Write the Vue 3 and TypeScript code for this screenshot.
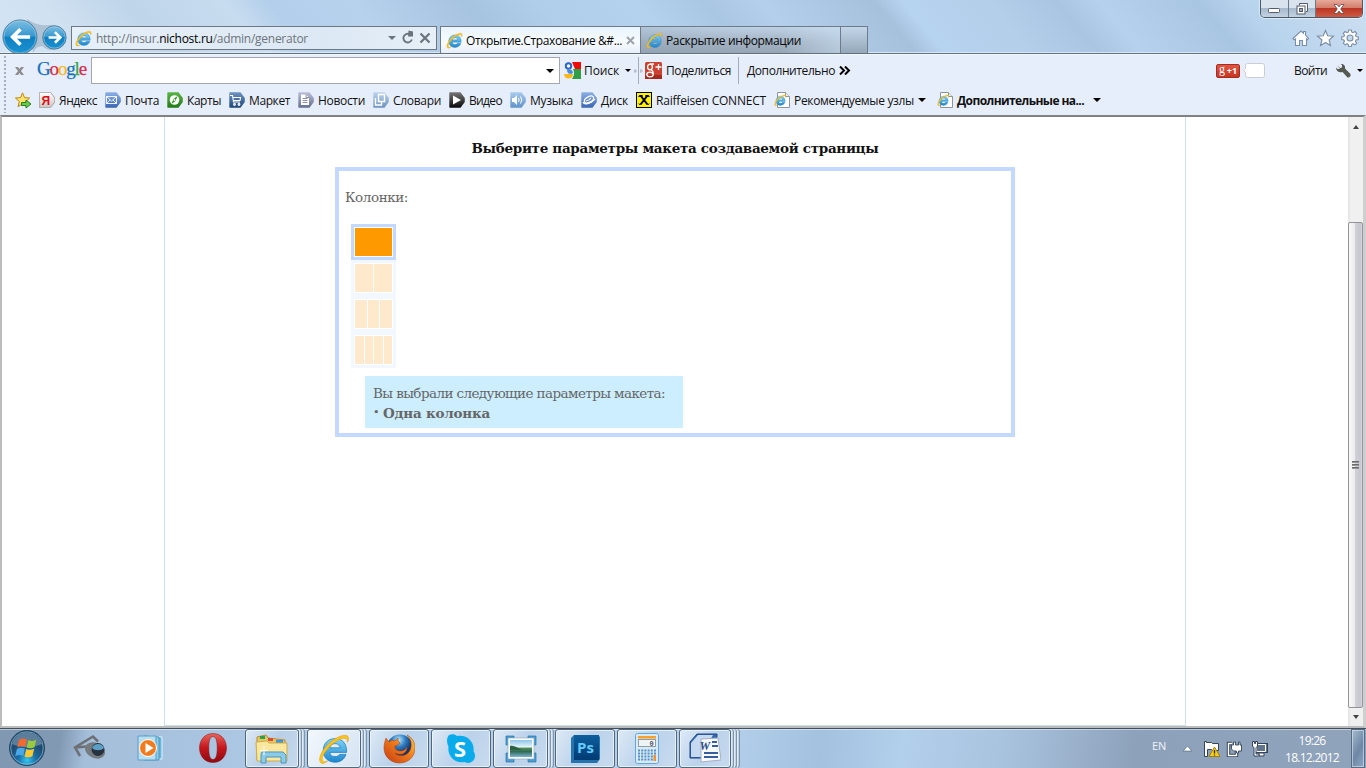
<script setup lang="ts">
import type { Directive } from 'vue'

interface Bookmark { id: string; label: string; width: number; arrow?: boolean; bold?: boolean }
interface Task { id: string; width: number; stacked?: number; gap: number }

// Adjusts tracking so a label fills its intended width in pixels.
const vFit: Directive<HTMLElement, number> = {
  mounted(el, { value }) {
    const count = Math.max(1, (el.textContent ?? '').trim().length)
    const natural = el.getBoundingClientRect().width
    el.style.letterSpacing = `${(value - natural) / count}px`
  },
}

const bookmarks: Bookmark[] = [
  { id: 'yandex', label: 'Яндекс', width: 38 },
  { id: 'mail', label: 'Почта', width: 34 },
  { id: 'maps', label: 'Карты', width: 34 },
  { id: 'market', label: 'Маркет', width: 41 },
  { id: 'news', label: 'Новости', width: 47 },
  { id: 'dict', label: 'Словари', width: 48 },
  { id: 'video', label: 'Видео', width: 33 },
  { id: 'music', label: 'Музыка', width: 43 },
  { id: 'disk', label: 'Диск', width: 27 },
  { id: 'raif', label: 'Raiffeisen CONNECT', width: 110 },
  { id: 'page', label: 'Рекомендуемые узлы', width: 120, arrow: true },
  { id: 'page', label: 'Дополнительные на...', width: 127, arrow: true, bold: true },
]

const tagFill: Record<string, string> = {
  yandex: 'url(#gWhite)', mail: 'url(#gMail)', maps: 'url(#gGreen)', market: 'url(#gNavy)',
  news: 'url(#gSlate)', dict: 'url(#gPale)', video: 'url(#gBlack)', music: 'url(#gSky)', disk: 'url(#gMail)',
}

const layouts = [1, 2, 3, 4]
const selected = 1

const tasks: Task[] = [
  { id: 'explorer', width: 54, stacked: 2, gap: 2 },
  { id: 'ie', width: 54, stacked: 2, gap: 2 },
  { id: 'firefox', width: 60, gap: 2 },
  { id: 'skype', width: 60, gap: 2 },
  { id: 'viewer', width: 55, stacked: 2, gap: 1 },
  { id: 'ps', width: 60, gap: 2 },
  { id: 'calc', width: 60, gap: 2 },
  { id: 'word', width: 52, stacked: 3, gap: 0 },
]
</script>

<template>
  <div class="screen">
    <svg class="defs" width="0" height="0">
      <defs>
        <linearGradient id="gWhite" x2="0" y2="1"><stop stop-color="#fff" /><stop offset="1" stop-color="#c9c5c1" /></linearGradient>
        <linearGradient id="gMail" x2="0" y2="1"><stop stop-color="#8db0e4" /><stop offset="1" stop-color="#3a65b4" /></linearGradient>
        <linearGradient id="gGreen" x2="0" y2="1"><stop stop-color="#5cb547" /><stop offset="1" stop-color="#237a16" /></linearGradient>
        <linearGradient id="gNavy" x2="0" y2="1"><stop stop-color="#6d94c4" /><stop offset="1" stop-color="#1e4676" /></linearGradient>
        <linearGradient id="gSlate" x2="0" y2="1"><stop stop-color="#b9bfd6" /><stop offset="1" stop-color="#666e92" /></linearGradient>
        <linearGradient id="gPale" x2="0" y2="1"><stop stop-color="#bdd4ec" /><stop offset="1" stop-color="#6d93c0" /></linearGradient>
        <linearGradient id="gBlack" x2="0" y2="1"><stop stop-color="#777" /><stop offset="1" stop-color="#080808" /></linearGradient>
        <linearGradient id="gSky" x2="0" y2="1"><stop stop-color="#a9cbee" /><stop offset="1" stop-color="#5f93cb" /></linearGradient>
        <linearGradient id="gNav" x2="0" y2="1"><stop stop-color="#7fbfe2" /><stop offset=".48" stop-color="#3697cf" /><stop offset=".5" stop-color="#0d7fc2" /><stop offset="1" stop-color="#1b93d2" /></linearGradient>
        <linearGradient id="gE" x2="0" y2="1"><stop stop-color="#7fd4f5" /><stop offset="1" stop-color="#1c86cf" /></linearGradient>
        <linearGradient id="gOpera" x2="0" y2="1"><stop stop-color="#e8645c" /><stop offset=".5" stop-color="#c4161c" /><stop offset="1" stop-color="#8d0a10" /></linearGradient>
        <radialGradient id="gOrb" cy=".85"><stop stop-color="#35c8f2" /><stop offset=".5" stop-color="#1b6ea6" /><stop offset="1" stop-color="#1f4d74" /></radialGradient>
        <radialGradient id="gGlobe" cx=".45" cy=".2"><stop stop-color="#bfe6fb" /><stop offset=".5" stop-color="#2f7fc4" /><stop offset="1" stop-color="#12356f" /></radialGradient>
        <linearGradient id="gFox" x1="1" x2="0" y2="1"><stop stop-color="#ffd23c" /><stop offset=".45" stop-color="#ef7d1b" /><stop offset="1" stop-color="#c33a12" /></linearGradient>
        <linearGradient id="gPs" x2="0" y2="1"><stop stop-color="#0d5f9e" /><stop offset="1" stop-color="#003a73" /></linearGradient>
        <linearGradient id="gLake" x2="0" y2="1"><stop stop-color="#8cc4ea" /><stop offset=".4" stop-color="#e4f3fa" /><stop offset=".5" stop-color="#4f8a56" /><stop offset=".68" stop-color="#2f6b58" /><stop offset="1" stop-color="#7fb3cf" /></linearGradient>
        <symbol id="e" viewBox="0 0 16 16">
          <path d="M14.300 9.700H5.900c.2 1.400 1.200 2.100 2.600 2.100 1 0 1.800-.4 2.300-1.100h3.200c-.8 2.500-2.800 3.900-5.500 3.900-3.500 0-5.900-2.300-5.900-5.800 0-3.600 2.500-6 5.900-6 3.700 0 6 2.500 5.800 6.900zM11.100 7.400C10.900 6.100 9.900 5.300 8.500 5.300S6.200 6.100 5.900 7.400z" fill="url(#gE)" stroke="#1978b8" stroke-width=".35" />
          <path d="M1.700 15.100C-.5 13.500 1.600 8.800 5.500 5.200 9.500 1.500 14 .3 15 1.800c.5.8.2 1.900-.3 2.900.1-1.200-.2-1.900-1.200-2-2.100-.2-5.300 1.800-7.800 4.300C2.800 10 1.200 13.300 2.700 14.200c.6.300 1.300.1 2.200-.3-1.200 1-2.400 1.700-3.200 1.200z" fill="#fbc31f" stroke="#dd9a0c" stroke-width=".25" />
        </symbol>
      </defs>
    </svg>

    <header class="chrome">
      <svg class="nav" width="71" height="35" viewBox="0 0 71 35">
        <path d="M27 0c9 7 18 7 26 6a13 13 0 1 1-10 22c-5 0-8 2-10 7z" fill="#90a8be" opacity=".55" />
        <circle cx="19.500" cy="18.500" r="17.500" fill="url(#gNav)" stroke="#567d9b" />
        <circle cx="19.500" cy="18.500" r="16.500" fill="none" stroke="#9ed4ee" opacity=".6" />
        <path d="M30 18.500H13M20 10.500l-8 8 8 8" fill="none" stroke="#fff" stroke-width="3.800" />
        <circle cx="55" cy="19" r="12" fill="url(#gNav)" stroke="#547b99" />
        <circle cx="55" cy="19" r="11" fill="none" stroke="#a4d6ee" opacity=".6" />
        <path d="M49 19h11M55.500 13.500l5.500 5.500-5.500 5.500" fill="none" stroke="#fff" stroke-width="2.700" />
      </svg>
      <div class="address">
        <svg class="e16" width="17" height="17"><use href="#e" /></svg>
        <span class="url" v-fit="212">http://insur.<b>nichost.ru</b>/admin/generator</span>
        <svg class="addr-tools" width="46" height="16" viewBox="0 0 46 16">
          <path d="M1 6h8l-4 4z" fill="#6b747d" />
          <path d="M24.800 9.500A4.300 4.300 0 1 1 22.500 4.200" fill="none" stroke="#6b747d" stroke-width="1.900" /><path d="M21.500.5l4.500 1v5h-5z" fill="#6b747d" />
          <path d="M33.500 3.500l9 9m0-9l-9 9" stroke="#6b747d" stroke-width="2.200" />
        </svg>
      </div>
      <div class="tab active">
        <svg width="17" height="17"><use href="#e" /></svg>
        <span v-fit="156">Открытие.Страхование &amp;#...</span>
        <svg width="9" height="9" viewBox="0 0 9 9"><path d="M1 1l7 7m0-7L1 8" stroke="#9da4aa" stroke-width="2" /></svg>
      </div>
      <div class="tab">
        <svg width="17" height="17"><use href="#e" /></svg>
        <span v-fit="135">Раскрытие информации</span>
      </div>
      <div class="newtab"></div>
      <svg class="tools" width="68" height="18" viewBox="0 0 68 18">
        <g fill="#fff" stroke="#7b8ea6" stroke-width="1.100">
          <path d="M1 9.500L9 2l2.500 2.300V2.500h2V6l3 3.500-1 1.200-1-.8v6.600h-4v-5h-3v5h-4V10l-1.300.7z" />
          <path d="M33.500 1.500l2.200 5.300 5.800.4-4.400 3.800 1.400 5.500-5-3-5 3L30 11l-4.500-3.800 5.800-.4z" />
          <path d="M56.700 1h2.600l.5 2.200 1.200.5 2-1.200 1.700 1.800-1.200 1.900.6 1.300 2.200.5v2.500l-2.200.5-.6 1.300 1.200 1.900-1.700 1.700-2-1.200-1.200.6-.5 2.200h-2.600l-.5-2.200-1.200-.6-2 1.200-1.700-1.700 1.200-1.900-.6-1.300-2.200-.5V8l2.200-.5.600-1.300L51.300 4.300 53 2.500l2 1.200 1.200-.5z" />
          <circle cx="58" cy="9" r="3" fill="#c4d8ed" />
        </g>
      </svg>
      <div class="winctl">
        <i class="min"><svg width="13" height="6"><rect x=".5" y=".5" width="11" height="4" rx="1" fill="#fff" stroke="#555b6b" /></svg></i>
        <i class="max"><svg width="12" height="12"><path d="M3.500 2V.5h8v8H10" fill="#fff" stroke="#555b6b" /><rect x="1" y="3" width="8" height="8" fill="#fff" stroke="#555b6b" /><rect x="3.500" y="5.500" width="3" height="3" fill="#9daec3" stroke="#555b6b" /></svg></i>
        <i class="close"><svg width="12" height="10" viewBox="0 0 12 10"><path d="M1 .5h3l2 2.400L8 .5h3L7.700 5 11 9.500H8L6 7.100 4 9.500H1L4.300 5z" fill="#fff" stroke="#62494c" stroke-width=".8" /></svg></i>
      </div>
    </header>

    <section class="bars">
      <div class="grip"></div>
      <div class="rows">
        <div class="google-row">
          <svg class="gx" width="9" height="8" viewBox="0 0 9 8"><path d="M0 0h3l1.500 2L6 0h3L6 4l3 4H6L4.500 6 3 8H0l3-4z" fill="#8c8c8c" /></svg>
          <div class="google" v-fit="49"><span class="b">G</span><span class="r">o</span><span class="y">o</span><span class="b">g</span><span class="g">l</span><span class="r">e</span></div>
          <div class="search"><i class="arrow"></i></div>
          <svg class="gicon" width="17" height="17" viewBox="0 0 17 17"><path d="M8 0h9v7h-6z" fill="#f00a0a" /><path d="M9 7h8v10H8c2-3 3-6 1-10z" fill="#2f9e44" /><path d="M0 12h9c0 3-2 4.500-4.500 4.500S0 15 0 12z" fill="#fbb919" /><circle cx="4.500" cy="4" r="3.700" fill="#2a65c7" /><circle cx="4.500" cy="4" r="1.700" fill="#fff" /><path d="M3 8c3-1 5.500-.5 6 3l-2 1c-2 0-4-1-4-4z" fill="#4a8adf" /></svg>
          <span class="find" v-fit="35">Поиск</span><i class="arrow small"></i>
          <svg class="dots" width="9" height="4"><path d="M1 0v4M0 2h3M6 2h3M7 0v4" stroke="#aab3c0" /></svg>
          <i class="sep s1"></i>
          <svg class="gplus" width="17" height="17" viewBox="0 0 17 17"><rect width="17" height="17" rx="1.500" fill="#cb4230" /><rect y="13" width="17" height="4" fill="#a52b1d" /><g fill="none" stroke="#fff" stroke-width="1.300"><ellipse cx="5" cy="5" rx="2.400" ry="2.800" /><ellipse cx="5" cy="12.500" rx="3.200" ry="2.300" /><path d="M5 2h4M6 8c3 1 2 2 2 4M10.500 5h6M13.500 2v6" /></g></svg>
          <span class="share" v-fit="65">Поделиться</span>
          <i class="sep s2"></i>
          <span class="more" v-fit="88">Дополнительно</span>
          <svg class="chev" width="12" height="9" viewBox="0 0 12 9"><path d="M1 .5l4 4-4 4M6 .5l4 4-4 4" fill="none" stroke="#000" stroke-width="2" /></svg>
          <div class="plusone"><span class="g1">g</span><span>+1</span></div>
          <svg class="bubble" width="23" height="16"><path d="M4.500.5h15a2 2 0 0 1 2 2v10a2 2 0 0 1-2 2h-15a2 2 0 0 1-2-2v-3L.5 7.500l2-2v-3a2 2 0 0 1 2-2z" fill="#fff" stroke="#cacdd2" /></svg>
          <span class="login" v-fit="33">Войти</span>
          <svg class="wrench" width="15" height="14" viewBox="0 0 15 14"><path d="M1 1l3 3 2-.5L6 1 4.500 0c3-.5 5 1.500 4.500 4.500L14.500 10v2L13 13.500h-1.500L6.500 8C3 9 0 7 0 3.500L1.500 5H4" fill="#555a50" /></svg>
          <i class="arrow small last"></i>
        </div>
        <div class="marks">
          <svg class="addfav" width="17" height="17" viewBox="0 0 17 17"><path d="M7.500.8l2 4.800 5.200.4-4 3.500 1.300 5.200-4.500-2.900L3 14.700l1.300-5.200L.4 6l5.200-.4z" fill="#ffe36c" stroke="#bb8714" /><path d="M6.500 10.500h4.500V8l5 4-5 4v-2.500H6.500z" fill="#67cb4e" stroke="#27801a" /></svg>
          <div v-for="(b, i) in bookmarks" :key="i" class="mark" :class="{ bold: b.bold }">
            <svg width="16" height="16" viewBox="0 0 16 16">
              <template v-if="tagFill[b.id]">
                <path d="M1 .3h10.500L15.800 6v4l-4.300 5.700H1a.7.7 0 0 1-.7-.7V1A.7.7 0 0 1 1 .3z" :fill="tagFill[b.id]" :stroke="b.id === 'yandex' ? '#a9a6a3' : 'none'" />
                <text v-if="b.id === 'yandex'" x="2.500" y="12.500" class="ya">Я</text>
                <path v-else-if="b.id === 'mail'" d="M1.500 4.500h10v7h-10zM1.500 4.500l5 4.500 5-4.500M1.500 11.500l3.500-3.500M11.500 11.500L8 8" fill="none" stroke="#fff" stroke-width=".9" />
                <g v-else-if="b.id === 'maps'"><circle cx="7.500" cy="8" r="4.800" fill="#fff" /><path d="M10.500 4L8.500 9 4.500 12l2-5z" fill="#2a8a1c" /><circle cx="7.500" cy="8" r="1" fill="#fff" /></g>
                <g v-else-if="b.id === 'market'" fill="none" stroke="#fff" stroke-width="1.100"><path d="M1 3.500h2.500l1 6.500h6.500M4 5.500h7.500l-.5 3H4.500" /><circle cx="5.500" cy="12.500" r=".9" /><circle cx="10" cy="12.500" r=".9" /></g>
                <g v-else-if="b.id === 'news'"><path d="M3 2.500h5l3 3V13H3z" fill="#fff" /><path d="M4.500 6.500h5M4.500 8.500h5M4.500 10.500h5M8 2.500v3h3" stroke="#8a91b0" fill="none" /></g>
                <g v-else-if="b.id === 'dict'" fill="none" stroke="#fff" stroke-width="1.400"><path d="M5.500 2.500h6v7h-6z" /><path d="M8.500 9.500v3.500h-6V6" /></g>
                <path v-else-if="b.id === 'video'" d="M4 3.500l8 4.500-8 4.500z" fill="#fff" />
                <g v-else-if="b.id === 'music'"><path d="M2 6h2l3-3v10l-3-3H2z" fill="#fff" /><path d="M8.500 6a4 4 0 0 1 0 4M10.500 4.500a6 6 0 0 1 0 7" fill="none" stroke="#fff" /></g>
                <g v-else fill="none" stroke="#fff" stroke-width="1.200"><ellipse cx="8" cy="7.500" rx="5" ry="2.700" transform="rotate(-28 8 7.500)" /><path d="M2 10c1 3 7 2.500 12-3M5 9c3-.5 4-1.500 5-3" /></g>
              </template>
              <g v-else-if="b.id === 'raif'"><rect x=".5" y=".5" width="15" height="15" fill="#fff200" stroke="#000" /><path d="M4.500 3.500l7 9M11.500 3.500l-7 9" stroke="#000" stroke-width="2" /><path d="M2 5l1.500-2h3l.5 1.500zM14 5l-1.500-2h-3L9 4.500zM2 11l1.500 2h2zM14 11l-1.500 2h-2z" fill="#000" /></g>
              <g v-else><path d="M3.500.5h8l4 4v11h-12z" fill="#fff" stroke="#8d949b" /><path d="M11.500.5v4h4" fill="#edf1f4" stroke="#8d949b" /><svg x="0" y="2" width="12.500" height="12.500"><use href="#e" /></svg></g>
            </svg>
            <span class="lbl" :style="{ width: b.width + 'px' }"><span v-fit="b.width">{{ b.label }}</span></span>
            <i v-if="b.arrow" class="arrow"></i>
          </div>
        </div>
      </div>
    </section>

    <main class="viewport">
      <div class="page">
        <h1><span v-fit="407">Выберите параметры макета создаваемой страницы</span></h1>
        <div class="panel">
          <p class="caption"><span v-fit="63">Колонки:</span></p>
          <div class="choices">
            <div v-for="n in layouts" :key="n" class="choice" :class="{ on: n === selected }">
              <i v-for="c in n" :key="c"></i>
            </div>
          </div>
          <div class="summary">
            <div><span v-fit="292">Вы выбрали следующие параметры макета:</span></div>
            <div class="picked"><span>•</span><b v-fit="107">Одна колонка</b></div>
          </div>
        </div>
      </div>
      <div class="scroll">
        <i class="up"></i>
        <div class="thumb"><i></i><i></i><i></i></div>
        <i class="down"></i>
      </div>
    </main>

    <footer class="taskbar">
      <svg class="orb" width="38" height="38" viewBox="0 0 38 38">
        <circle cx="19" cy="19" r="17.500" fill="url(#gOrb)" stroke="#24455f" /><circle cx="19" cy="19" r="16.300" fill="none" stroke="#a4cee2" opacity=".6" />
        <path d="M4 15a15.500 15.500 0 0 1 30 0c-8 4-22 4-30 0z" fill="#fff" opacity=".28" />
        <path d="M11 11c3-2 5-2 8-.5L17.300 18c-3-1.200-5-1.200-8 .3z" fill="#f26932" /><path d="M20.300 11c3 1.500 5 1.200 8-.3l-1.800 7.500c-3 1.300-5 1.300-7.900.2z" fill="#9ac93d" />
        <path d="M9 19.800c3-1.500 5-1.400 7.900-.2L15.200 27c-3-1.300-5-1.200-8 .3z" fill="#4aa8e6" /><path d="M18.200 20c3 1.200 5 1.100 8-.2l-1.800 7.500c-3 1.400-5 1.200-7.900.1z" fill="#fdc932" />
      </svg>
      <svg class="cam" width="34" height="28" viewBox="0 0 34 28"><path d="M7 22l-5-8.500L20 2.500l5 5M2 13.500l12-1" fill="none" stroke="#6c7074" stroke-width="2.500" /><ellipse cx="22" cy="16.500" rx="10.500" ry="7.500" fill="#767b80" transform="rotate(25 22 16.500)" /><circle cx="25" cy="15.500" r="6.500" fill="#27323e" /><path d="M19 14a6.500 6.500 0 0 1 12 0c-3 3-9 3-12 0z" fill="#5e9fc6" /></svg>
      <svg class="wmp" width="30" height="28" viewBox="0 0 30 28"><path d="M12 2l14 1v22H12z" fill="#6db5dc" stroke="#e1f3fb" /><path d="M8 2l15 1v23H8z" fill="#90cbe9" stroke="#4d98bf" /><path d="M2 2h18v24H2z" fill="#b8dff1" stroke="#589fc4" /><circle cx="12" cy="14" r="8.500" fill="#f07c1d" stroke="#fff" /><path d="M9.500 9l8 5-8 5z" fill="#fff" /></svg>
      <svg class="opera" width="30" height="30" viewBox="0 0 30 30"><path fill-rule="evenodd" d="M15 .5c8 0 13.500 6 13.500 14.500S23 29.500 15 29.500 1.500 23.500 1.500 15 7 .5 15 .5zm0 3C12 3.500 10.800 8 10.800 15S12 26.500 15 26.500 19.200 22 19.200 15 18 3.500 15 3.500z" fill="url(#gOpera)" stroke="#8a1115" stroke-width=".5" /></svg>
      <div class="tasks">
        <div v-for="t in tasks" :key="t.id" class="task-group" :style="{ marginRight: t.gap + 'px' }">
          <div class="task" :class="{ lit: t.id === 'ie' }" :style="{ width: t.width + 'px' }">
            <svg v-if="t.id === 'explorer'" width="34" height="32" viewBox="0 0 34 32"><path d="M2 4l9-2 2 3 17 2v20H2z" fill="#eac764" stroke="#b88b31" /><path d="M5 3h5v3H5z" fill="#28a345" /><path d="M13 5h5v3h-5z" fill="#dc4c30" /><path d="M21 7h7v3h-7z" fill="#3c95d6" /><path d="M1 9l11-1 2 2h18v18H2z" fill="#f9e79d" stroke="#cfaa4c" /><path d="M6 30V21q0-2 2-2h20l3 3v8h-5v-6H11v6z" fill="#8ccbe8" stroke="#4b96bc" /><path d="M9 13v9M5 17.500h8" stroke="#fff" stroke-width="1" /></svg>
            <svg v-else-if="t.id === 'ie'" width="32" height="32"><use href="#e" /></svg>
            <svg v-else-if="t.id === 'firefox'" width="32" height="32" viewBox="0 0 32 32"><circle cx="17" cy="15" r="13.500" fill="url(#gGlobe)" /><path d="M3 5l3 4c2-2 4-2 6-1l3-3c0 3 0 4 2 5l-2 2-3 1c-1 3 2 5 6 5 3 0 5-2 6-4 0 7-7 9-12 6 4 5 15 3 16-6 1-5-1-9-4-12 6 3 8 8 8 13 0 9-7 15-15.500 15C7 30 1 23 1 15c0-4 1-7 2-10z" fill="url(#gFox)" stroke="#b13b10" stroke-width=".5" /></svg>
            <svg v-else-if="t.id === 'skype'" width="30" height="30" viewBox="0 0 30 30"><path d="M3 1c3-1.500 6-1 8 1 10-2 18 6 16.500 15.500C32 23 26 32 18.500 28 9 30 1 22 2.500 12.500.5 8 .5 4 3 1z" fill="#0aabea" /><text x="8" y="22.500" class="sk">S</text></svg>
            <svg v-else-if="t.id === 'viewer'" width="32" height="28" viewBox="0 0 32 28"><path d="M1 1h8v5H6v4H1zM23 1h8v9h-4V6h-4zM1 18h5v4h3v5H1zM27 18h4v9h-8v-5h4z" fill="#4b9cd2" stroke="#2a75aa" stroke-width=".7" /><path d="M3 3h26v21H3z" fill="#f8fcfd" stroke="#92a9b4" stroke-width=".6" /><path d="M5 5h22v17H5z" fill="url(#gLake)" /><path d="M5 11c4-1 8 2 12 4H5z" fill="#2c6242" /></svg>
            <svg v-else-if="t.id === 'ps'" width="31" height="30" viewBox="0 0 31 30"><path d="M1 4l3-3h24l2 2v22l-3 4H1z" fill="#2574ad" /><path d="M4 1h25v25H4z" fill="url(#gPs)" /><text x="7" y="19" class="pst">Ps</text></svg>
            <svg v-else-if="t.id === 'calc'" width="24" height="31" viewBox="0 0 24 31"><rect x=".5" y=".5" width="23" height="30" rx="2" fill="#d6eafa" stroke="#67a7d3" /><path d="M3 3h18v2.500H3z" fill="#f6a12b" /><rect x="3.500" y="6.500" width="17" height="7" fill="#edf4f6" stroke="#929da4" /><text x="14.500" y="12.500" class="zero">0</text><path d="M3 17.500h18M3 20.500h18M3 23.500h18M3 26.500h18" stroke="#568fc0" stroke-width="2" stroke-dasharray="2 1.200" /><path d="M18.500 22h2.500v6h-2.500z" fill="#f2922b" /></svg>
            <svg v-else width="32" height="31" viewBox="0 0 32 31"><path d="M8 1h20l-1 24H1V9z" fill="#3469ad" stroke="#1c4588" /><path d="M9 2h15L12 24H2V10z" fill="#c6d9f2" /><path d="M12 6l17-1 3 22-20 2z" fill="#f7f8fc" stroke="#a4afc2" /><text x="10.500" y="17" class="wt">W</text><path d="M23 9h5M23 13h6M15 20h14M15 24h14" stroke="#365e9d" stroke-width="2" /></svg>
          </div>
          <i v-for="s in t.stacked ?? 0" :key="s" class="stack"></i>
        </div>
      </div>
      <span class="lang">EN</span>
      <svg class="tray" width="86" height="18" viewBox="0 0 86 18">
        <path d="M.2 12l4.300-5 4.300 5z" fill="#fff" stroke="#4f6077" stroke-width=".6" />
        <g stroke="#34445a" stroke-width="1"><path d="M21.500 2.500h2v1h5l1 1h6v7h-6l-1-1h-4v7h-3z" fill="#fff" /><path d="M31.500 8l5.500 9.500H26z" fill="#f4cf22" stroke="#a57d06" /><path d="M31.500 11v3.500M31.500 15.500v1" stroke="#342d06" stroke-width="1.300" />
        <path d="M49 4.500h-3.500v12h8v-4" fill="none" stroke="#34445a" stroke-width="3.400" /><path d="M49 4.500h-3.500v12h8v-4" fill="none" stroke="#fff" stroke-width="1.400" /><path d="M50.500 3v3h-2v4l2 2h3v2h2v-2h3V6h-1.500V3h-1.500v3h-3V3z" fill="#fff" stroke-width=".9" />
        <rect x="72.500" y="4.500" width="12" height="9" fill="#64768e" stroke="#34445a" /><path d="M73.500 5.500h9v7h-9z" fill="#60748c" stroke="#fff" /><path d="M76 14h5v3h-5z" fill="#fff" /><path d="M69.500 2.500h2v2h1v-2h2v5l-1.500 1V15h3v2h-5V8.500l-1.500-1z" fill="#fff" /></g>
      </svg>
      <div class="clock"><span v-fit="27">19:26</span><span v-fit="54">18.12.2012</span></div>
      <div class="peek"></div>
    </footer>
  </div>
</template>

<style>
body { margin: 0; overflow: hidden; }
</style>

<style scoped>
.screen { width: 1366px; height: 768px; display: flex; flex-direction: column; overflow: hidden; font: 12px "Open Sans", "Noto Sans", sans-serif; color: #111; background: #fff; position: relative; }
.screen *, .screen { box-sizing: border-box; }
svg { display: block; flex: none; }
span { white-space: nowrap; }
i { display: block; flex: none; }
.defs { position: absolute; }
.chrome { height: 54px; flex: none; display: flex; align-items: flex-start; position: relative; border-bottom: 1px solid #61717f;
  background: linear-gradient(0deg, rgba(230,241,252,.75) 0 1px, transparent 1px), linear-gradient(50deg, #d4e4f3 0, #d0e1f1 6%, #bfd5ea 12%, #c8dcef 19%, #b3cfeb 22%, #b7d2ed 28%, #a6c3df 36%, #b0cde9 41%, #b4d1ed 48%, #a9c6e2 53%, #b3cfeb 57%, #a6c1dc 65%, #b6d3ef 67%, #b3cfea 73%, #a9c5e1 78%, #b5d1ed 81%, #a8c5e2 88%, #b7d3ed 91%, #cddff1 100%); }
.nav { margin-top: 19px; height: 34px; }
.address { margin-top: 26px; width: 366px; height: 24px; border: 1px solid #6f7882; background: linear-gradient(110deg, #e6f0f9, #dce8f4 70%, #e7f0f8); display: flex; align-items: center; padding-left: 3px; }
.url { margin-left: 4px; color: #6e757b; }
.url b { font-weight: 400; color: #000; }
.addr-tools { margin-left: auto; margin-right: 3px; }
.tab { margin-top: 26px; height: 27px; width: 201px; border: 1px solid #6f7b86; border-bottom: 0; display: flex; align-items: center; padding-left: 5px; background: linear-gradient(90deg, rgba(140,158,178,.3), rgba(150,168,186,.1) 50% 70%, rgba(200,222,242,.6)), linear-gradient(#c2d5e8 0, #a3b3c3 60%, #96a6b6); color: #050505; }
.tab.active { margin-left: 3px; width: 200px; background: linear-gradient(#e9f4fd, #f7fbff 60%, #e7eef8); border-right: 0; }
.tab span { margin-left: 3px; width: auto; }
.tab.active > svg:last-child { margin-left: auto; margin-right: 5px; }
.newtab { margin-top: 26px; width: 27px; height: 27px; border: 1px solid #6f7b86; border-width: 1px 1px 0 0; background: linear-gradient(#c3d6e9, #95a8ba); }
.tools { margin: 29px 6px 0 auto; }
.winctl { position: absolute; right: 3px; top: 0; width: 103px; height: 18px; display: flex; border: 1px solid #4b5868; border-top: 0; border-radius: 0 0 5px 5px; overflow: hidden; box-shadow: 0 0 0 1px rgba(255,255,255,.45); }
.winctl i { display: flex; align-items: center; justify-content: center; width: 28px; background: linear-gradient(#d8e3ee 0 45%, #a6b8cc 47%, #c3d2e1); border-right: 1px solid #697a8d; }
.winctl .max { width: 27px; }
.winctl .close { flex: 1; border: 0; background: linear-gradient(#e6a998, #d57e6c 45%, #ba3523 48%, #cf5b42); }
.min svg { margin-top: 4px; }
.bars { height: 61px; flex: none; display: flex; background: #e7eefb; border-top: 1px solid #f3f7ff; }
.grip { margin: 1px 0 0 4px; width: 2px; height: 57px; background: repeating-linear-gradient(#a6aeb9 0 2px, transparent 2px 4px); }
.rows { flex: 1; }
.google-row { height: 31px; display: flex; align-items: center; }
.gx { margin-left: 9px; }
.google { margin-left: 13px; margin-top: -3px; font: 19px/24px "Liberation Serif", serif; flex: none; }
.b { color: #1673bd; } .r { color: #d92a4c; } .y { color: #f5b91a; } .g { color: #34a846; }
.google span { -webkit-text-stroke: .25px currentColor; }
.search { margin-left: 5px; width: 469px; height: 27px; border: 1px solid #a4a7ad; background: #fff; display: flex; align-items: center; justify-content: flex-end; padding-right: 5px; }
.arrow { width: 0; height: 0; border: 4px solid transparent; border-top-color: #000; border-bottom: 0; }
.arrow.small { border-width: 3px 3px 0; }
.gicon { margin-left: 4px; }
.find { margin-left: 3px; width: auto; }
.find + .arrow { margin-left: 6px; }
.dots { margin-left: 3px; margin-right: -5px; }
.sep { width: 1px; height: 27px; background: #a4acb8; }
.gplus { margin-left: 6px; }
.share { margin-left: 4px; }
.s2 { margin-left: 7px; }
.more { margin-left: 8px; }
.chev { margin-left: 4px; }
.plusone { margin-left: 365px; width: 24px; height: 14px; border-radius: 2px; border: 1px solid #a62c1d; background: linear-gradient(#e15542, #c53524); color: #fff; font: bold 9px/12px "Open Sans", sans-serif; display: flex; justify-content: space-evenly; }
.g1 { font: 12px/9px "Liberation Serif", serif; }
.bubble { margin-left: 3px; }
.login { margin-left: 28px; }
.wrench { margin-left: 9px; }
.last { margin-left: 6px; }
.marks { height: 28px; display: flex; align-items: center; padding-left: 9px; }
.addfav { margin-right: 7px; }
.mark { display: flex; align-items: center; margin-right: 8px; }
.mark .lbl { margin-left: 4px; }
.mark .arrow { margin: 0 3px 0 4px; }
.mark.bold { font-weight: 700; }
.mark.bold .arrow { margin-left: 9px; }
.ya { font: bold 12px "Liberation Sans", sans-serif; fill: #e00b12; }
.viewport { height: 613px; flex: none; display: flex; border: solid #bcbcbc; border-width: 2px 3px 2px 2px; border-top-color: #818181; border-right-color: #cfcfcf; background: #fff; color: #666; font: 13.500px/20px "DejaVu Serif", serif; }
.page { margin-left: 162px; width: 1022px; height: 609px; border: solid #cde1e8; border-width: 0 1px 1px; }
h1 { margin: 21px 0 9px; font-size: 13.500px; line-height: 20px; color: #111; text-align: center; }
.panel { margin: 0 auto; width: 680px; height: 270px; border: 4px solid #c3d9ff; }
.caption { margin: 16px 0 17px 6px; }
.choices { margin-left: 12px; width: 45px; }
.choice { width: 45px; height: 36px; border: 3px solid #f3f7ff; padding: 1px; display: flex; gap: 1px; }
.choice i { flex: 1; background: #ffe9cc; }
.choice.on { border-color: #c3d9ff; }
.choice.on i { background: #f90; }
.summary { margin: 8px 0 0 26px; width: 318px; height: 52px; padding: 7px 8px 0; background: #cef; }
.picked { display: flex; }
.picked span { width: 10px; flex: none; font-size: 11px; }
.scroll { margin-left: auto; width: 15px; display: flex; flex-direction: column; align-items: center; background: linear-gradient(90deg, #e3e3e3, #f0f0f0 20%); }
.up { margin-top: 8px; border: 3.500px solid transparent; border-top: 0; border-bottom: 4px solid #444; }
.thumb { margin-top: 93px; width: 15px; height: 486px; border: 1px solid #939398; border-radius: 2px; background: linear-gradient(90deg, #f8f8f8, #ebebed 45%, #d0d0d6 50%, #c6c6cf 90%, #dfdfe3); display: flex; flex-direction: column; align-items: center; justify-content: center; gap: 1px; }
.thumb i { width: 7px; height: 2px; background: linear-gradient(#555, #aaa); }
.down { margin-top: 7px; border: 3.500px solid transparent; border-bottom: 0; border-top: 4px solid #444; }
.taskbar { flex: 1; display: flex; align-items: flex-start; position: relative; border-top: 1px solid #424f5d; background: linear-gradient(rgba(255,255,255,.45) 0 1px, transparent 1px), linear-gradient(98deg, #8198b2 0, #8299b3 4.500%, #a5bfdb 6.500%, #a9c4e0 15%, #b3cee9 25%, #b5d1ed 52%, #a4c2e0 60%, #b2cfeb 66%, #a9c4df 73%, #9cb3ce 78%, #8da1ba 83%, #8fa3bb 100%); }
.orb { margin: 0 0 0 8px; }
.cam { margin: 5px 0 0 27px; }
.wmp { margin: 5px 0 0 29px; }
.opera { margin: 4px 0 0 32px; }
.tasks { margin-left: 17px; display: flex; height: 39px; }
.task-group { display: flex; height: 39px; }
.task { height: 39px; border: 1px solid #53667b; border-radius: 3px; box-shadow: inset 0 0 0 1px rgba(237,246,255,.8); background: linear-gradient(120deg, rgba(226,236,247,.9), rgba(192,212,234,.55) 50%, rgba(213,226,241,.6)); display: flex; align-items: center; justify-content: center; }
.task.lit { background: linear-gradient(120deg, #f2f7fc, #d5e3f2); }
.stack { width: 3px; height: 39px; border: 1px solid #8195aa; border-left-color: #e1ebf5; border-radius: 0 3px 3px 0; background: #bfd3e7; }
.sk { font: bold 22px "Open Sans", sans-serif; fill: #fff; }
.pst { font: bold 15px "Open Sans", sans-serif; fill: #62cbf9; }
.zero { font: bold 7px "Liberation Mono", monospace; fill: #556; }
.wt { font: italic bold 12px "Liberation Serif", serif; fill: #284d8c; }
.lang { margin: 9px 0 0 auto; color: #eef4fb; width: 16px; font-size: 11px; }
.tray { margin: 10px 0 0 15px; }
.clock { margin: 3px 0 0 16px; width: 54px; display: flex; flex-direction: column; align-items: center; line-height: 17px; color: #fff; }
.peek { margin-left: 12px; margin-right: 1px; width: 14px; height: 39px; border: 1px solid #596c82; box-shadow: inset 0 0 0 1px rgba(220,235,250,.55); background: linear-gradient(120deg, #a7bbcf, #6e87a4 55%, #8fa9c4); }
</style>
